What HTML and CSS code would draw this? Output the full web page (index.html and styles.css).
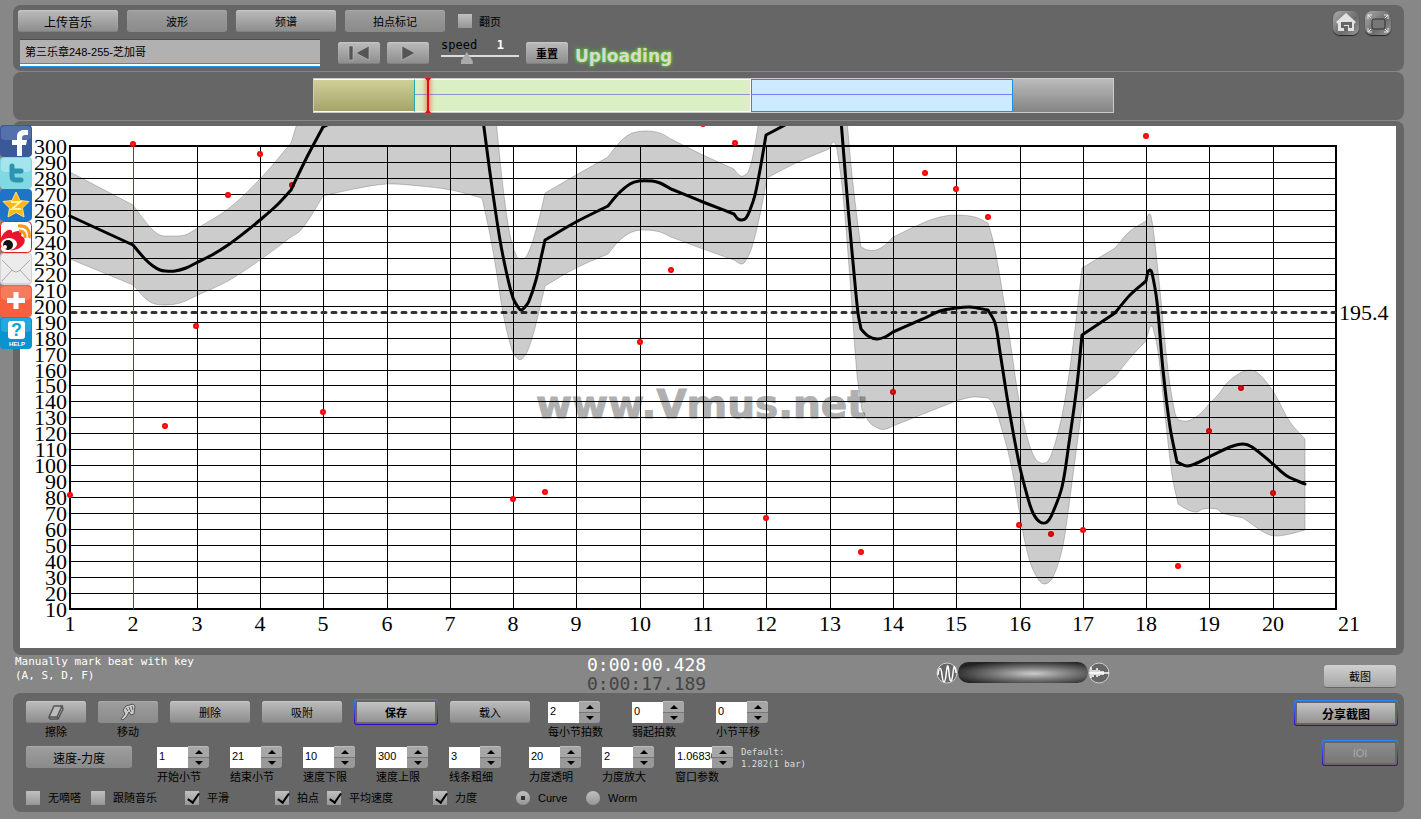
FILE: index.html
```html
<!DOCTYPE html>
<html lang="zh-CN">
<head>
    <meta charset="UTF-8">
    <meta name="viewport" content="width=device-width, initial-scale=1.0">
    <title>Vmus.net</title>
    <link rel="stylesheet" href="styles.css">
</head>
<body>
    <nav class="share">
        <a href="#" aria-label="Facebook">
            <svg viewBox="0 0 32 32"><rect width="32" height="32" rx="4" fill="#3b5998"/><rect x="1" y="1" width="30" height="14" rx="4" fill="#5471ac"/><path d="M17 31V20h-5v-5h5v-3c0-5 3-7 7-7h4v5h-3c-2 0-3 1-3 3v2h5l-1 5h-4v11z" fill="#fff"/></svg>
        </a>
        <a href="#" aria-label="Twitter">
            <svg viewBox="0 0 32 32"><rect width="32" height="32" rx="4" fill="#7fd8e2"/><rect x="1" y="1" width="30" height="14" rx="4" fill="#a2e5ec"/><path d="M12 9v10q0 4 4 4h5M12 14h9" fill="none" stroke="#2c93b0" stroke-width="5" stroke-linecap="round"/></svg>
        </a>
        <a href="#" aria-label="Qzone">
            <svg viewBox="0 0 32 32"><rect width="32" height="32" rx="4" fill="#1f74c8"/><path d="M16 3l4 8.500 9 1-6.500 6.500 1.500 9-8-4.500L8 28l1.500-9L3 12.500l9-1z" fill="#fdb913" stroke="#ffe08a"/><path d="M11 13h9l-8 7h9" fill="none" stroke="#fff2b0" stroke-width="2"/></svg>
        </a>
        <a href="#" aria-label="Weibo">
            <svg viewBox="0 0 32 32"><rect x=".5" y=".5" width="31" height="31" rx="4" fill="#fff" stroke="#d22"/><path d="M1 17c3-7 9-10 11-7 0 2 0 2 2 1 5-2 9-1 7 4 7 2 4 12-7 14-7 1-11-2-13-4z" fill="#e6162d"/><ellipse cx="9" cy="23" rx="8" ry="6" fill="#fff"/><circle cx="8" cy="24" r="5" fill="#111"/><circle cx="5" cy="26" r="2" fill="#fff"/><path d="M18 5q9-1 11 6 1 4 0 6M19 10q5 0 6 4v3" fill="none" stroke="#f8981d" stroke-width="3"/></svg>
        </a>
        <a href="#" aria-label="Email">
            <svg viewBox="0 0 32 32"><rect width="32" height="32" rx="4" fill="#d4d4d4"/><rect x="1" y="1" width="30" height="29" rx="4" fill="#ececec"/><path d="M2 7l11 11q3 2 6 0L30 7M2 28l10-11M30 28L20 17" fill="none" stroke="#aaa"/></svg>
        </a>
        <a href="#" aria-label="More">
            <svg viewBox="0 0 32 32"><rect width="32" height="32" rx="4" fill="#f5603f"/><rect x="1" y="1" width="30" height="14" rx="4" fill="#f87a5c"/><path d="M16 7v17M7 15.500h18" stroke="#fff" stroke-width="5"/></svg>
        </a>
        <a href="#" aria-label="Help">
            <svg viewBox="0 0 32 32"><rect width="32" height="32" rx="4" fill="#0a94cf"/><rect x="1" y="1" width="30" height="14" rx="4" fill="#25a8dc"/><rect x="8" y="4" width="17" height="18" rx="3" fill="#fff"/><text x="16.500" y="19" class="help-mark">?</text><text x="17" y="29" class="help-text">HELP</text></svg>
        </a>
    </nav>

    <header class="panel toolbar">
        <div>
            <div class="tabs">
                <button class="btn big">上传音乐</button>
                <button class="btn dim">波形</button>
                <button class="btn">频谱</button>
                <button class="btn dim">拍点标记</button>
                <label class="tick"><input type="checkbox">翻页</label>
            </div>
            <div class="player">
                <input class="track-name" type="text" value="第三乐章248-255-芝加哥" aria-label="Track">
                <button class="btn" aria-label="Back to start">
                    <svg width="22" height="16" viewBox="0 0 22 16"><path d="M1 1h4v14H1zM21 1v14L8 8z" fill="#555" stroke="#ccc" stroke-width=".5"/></svg>
                </button>
                <button class="btn" aria-label="Play">
                    <svg width="16" height="16" viewBox="0 0 16 16"><path d="M2 1v14l13-7z" fill="#555" stroke="#ccc" stroke-width=".5"/></svg>
                </button>
                <div class="speed">
                    <label for="speed">speed</label><output for="speed">1</output>
                    <input id="speed" type="range" min="0" max="3" step="0.1" value="0.9">
                </div>
                <button class="btn strong">重置</button>
                <span class="uploading">Uploading</span>
            </div>
        </div>
        <div class="window-buttons">
            <button aria-label="Home">
                <svg viewBox="0 0 26 25"><path d="M13 2L3 11l2 2v7h16v-7l2-2z" fill="#e2e2e2"/><path d="M8 17v-6h11v6h-3v-3h-5v3z" fill="#666"/><path d="M11 20v-5h4v5z" fill="#666"/></svg>
            </button>
            <button aria-label="Fullscreen">
                <svg viewBox="0 0 26 25"><rect x="7" y="8" width="13" height="10" rx="2" fill="#777" stroke="#333"/><path d="M3 8V4h4M3 4l3 3M19 4h4v4M23 4l-3 3M3 17v4h4M3 21l3-3M23 17v4h-4M23 21l-3-3" fill="none" stroke="#e8e8e8"/></svg>
            </button>
        </div>
    </header>

    <section class="panel overview">
        <div class="wave">
            <div class="part before"></div>
            <div class="part selected"></div>
            <div class="part loaded"></div>
            <div class="part empty"></div>
            <div class="playhead"></div>
        </div>
    </section>

    <main class="panel chart">
        <svg id="chart" viewBox="20 126 1376 522">
            <text x="536" y="418" class="watermark">www.Vmus.net</text>
            <g id="grid"></g>
            <g id="labels"></g>
            <path class="average" d="M72 312.500H1335"/>
            <text class="axis" x="1339" y="320">195.4</text>
            <path class="cursor" d="M133 144V609"/>
            <g id="beats"></g>
            <g id="curves"></g>
        </svg>
    </main>

    <section class="status">
        <p class="hint">Manually mark beat with key<br>(A, S, D, F)</p>
        <p class="time">0:00:00.428<br><span>0:00:17.189</span></p>
        <div class="zoom">
            <svg viewBox="0 0 22 22"><circle cx="11" cy="11" r="10"/><path d="M2 13c1-9 3-9 4 0s3 9 4 0 2-14 3-2 3 9 4 0 2-8 3 0" stroke-width="1.500"/></svg>
            <input type="range" aria-label="Zoom">
            <svg viewBox="0 0 22 22"><circle cx="11" cy="11" r="10"/><path d="M1 11h20M3 5v11M5 8v7M7 8v5M9 6v9M11 8v6M13 9v4M15 9v4" stroke-width="1.500"/></svg>
        </div>
        <button class="btn light">截图</button>
    </section>

    <footer class="panel settings">
        <div>
            <div class="row">
                <div class="tool">
                    <button class="btn" id="erase" aria-labelledby="erase-label"><svg width="20" height="16" viewBox="0 0 20 16"><path d="M8 2h8l-5 11H3zM16 2l1 3-5 10-1-2M12 15H4l-1-2" fill="#bbb" stroke="#555" stroke-width="1.500"/></svg></button>
                    <span id="erase-label">擦除</span>
                </div>
                <div class="tool">
                    <button class="btn dim" id="move" aria-labelledby="move-label"><svg width="20" height="18" viewBox="0 0 20 18"><path d="M3 16l4-5-2-4 3-4 7-2 2 2-1 8-3 1-2-3-2 4-4 4zM8 5l2 3M11 4l2 5M14 3l1 4" fill="#ccc" stroke="#555"/></svg></button>
                    <span id="move-label">移动</span>
                </div>
                <button class="btn wide">删除</button>
                <button class="btn wide">吸附</button>
                <button class="btn wide ringed">保存</button>
                <button class="btn wide">载入</button>
                <div class="steppers roomy">
                    <div class="stepper"><input id="beats-per-bar" type="text" value="2"><button aria-label="+"></button><button aria-label="-"></button><label for="beats-per-bar">每小节拍数</label></div>
                    <div class="stepper"><input id="upbeat" type="text" value="0"><button aria-label="+"></button><button aria-label="-"></button><label for="upbeat">弱起拍数</label></div>
                    <div class="stepper"><input id="shift" type="text" value="0"><button aria-label="+"></button><button aria-label="-"></button><label for="shift">小节平移</label></div>
                </div>
            </div>
            <div class="row">
                <button class="btn dim mode">速度-力度</button>
                <div class="steppers">
                    <div class="stepper"><input id="from" type="text" value="1"><button aria-label="+"></button><button aria-label="-"></button><label for="from">开始小节</label></div>
                    <div class="stepper"><input id="to" type="text" value="21"><button aria-label="+"></button><button aria-label="-"></button><label for="to">结束小节</label></div>
                    <div class="stepper"><input id="min" type="text" value="10"><button aria-label="+"></button><button aria-label="-"></button><label for="min">速度下限</label></div>
                    <div class="stepper"><input id="max" type="text" value="300"><button aria-label="+"></button><button aria-label="-"></button><label for="max">速度上限</label></div>
                    <div class="stepper"><input id="line" type="text" value="3"><button aria-label="+"></button><button aria-label="-"></button><label for="line">线条粗细</label></div>
                </div>
                <div class="steppers">
                    <div class="stepper"><input id="alpha" type="text" value="20"><button aria-label="+"></button><button aria-label="-"></button><label for="alpha">力度透明</label></div>
                    <div class="stepper"><input id="scale" type="text" value="2"><button aria-label="+"></button><button aria-label="-"></button><label for="scale">力度放大</label></div>
                    <div class="stepper long"><input id="window" type="text" value="1.06830"><button aria-label="+"></button><button aria-label="-"></button><label for="window">窗口参数</label></div>
                </div>
                <p class="default">Default:<br>1.282(1 bar)</p>
            </div>
            <div class="options">
                <label class="tick"><input type="checkbox">无嘀嗒</label>
                <label class="tick"><input type="checkbox">跟随音乐</label>
                <label class="tick"><input type="checkbox" checked>平滑</label>
                <label class="tick"><input type="checkbox" checked>拍点</label>
                <label class="tick"><input type="checkbox" checked>平均速度</label>
                <label class="tick"><input type="checkbox" checked>力度</label>
                <label class="tick"><input type="radio" name="view" checked>Curve</label>
                <label class="tick"><input type="radio" name="view">Worm</label>
            </div>
        </div>
        <div class="side">
            <button class="btn ringed share-shot">分享截图</button>
            <button class="btn ringed" disabled>IOI</button>
        </div>
    </footer>

    <script>
        const NS = 'http://www.w3.org/2000/svg';
        const left = 70, right = 1336, upper = 146, lower = 609;

        function add(parent, tag, attrs, text) {
            const el = document.createElementNS(NS, tag);
            for (const key in attrs) el.setAttribute(key, attrs[key]);
            if (text !== undefined) el.textContent = text;
            document.getElementById(parent).appendChild(el);
        }

        // tempo lines
        for (let v = 10; v <= 300; v += 10) {
            const y = Math.round(lower - (v - 10) * (lower - upper) / 290);
            add('grid', 'path', { d: `M${left} ${y}H${right}` });
            add('labels', 'text', { class: 'axis', x: 67, y: y + 8, 'text-anchor': 'end' }, v);
        }

        // bar lines
        for (let bar = 1; bar <= 21; bar++) {
            const x = Math.round(left + (bar - 1) * (right - left) / 20);
            add('grid', 'path', { d: `M${x} ${upper}V${lower}` });
            add('labels', 'text', {
                class: 'axis',
                x: bar === 21 ? x + 2 : x,
                y: 631,
                'text-anchor': bar === 21 ? 'start' : 'middle'
            }, bar);
        }
        add('grid', 'rect', { class: 'frame', x: left, y: upper, width: right - left, height: lower - upper });

        const beats = [
            [70, 495], [133, 144], [165, 426], [196, 326], [228, 195], [260, 154], [292, 185],
            [323, 412], [513, 499], [545, 492], [640, 342], [671, 270], [703, 124], [735, 143],
            [766, 518], [861, 552], [893, 392], [925, 173], [956, 189], [988, 217], [1019, 525],
            [1051, 534], [1083, 530], [1146, 136], [1178, 566], [1209, 431], [1241, 388], [1273, 493]
        ];
        beats.forEach(([x, y]) => add('beats', 'circle', { cx: x, cy: y, r: 2 }));

        // Smooth line through the points; "|" marks a corner between two runs
        function smooth(data) {
            let d = '';
            data.split('|').forEach(run => {
                const p = run.trim().split(/\s+/).map(s => s.split(',').map(Number));
                d += (d ? 'L' : 'M') + p[0];
                for (let i = 0; i < p.length - 1; i++) {
                    const a = p[i], b = p[i + 1];
                    const third = Math.hypot(b[0] - a[0], b[1] - a[1]) / 3;
                    const s = tangent(p[i - 1] || a, b), e = tangent(a, p[i + 2] || b);
                    d += `C${a[0] + s[0] * third} ${a[1] + s[1] * third} ${b[0] - e[0] * third} ${b[1] - e[1] * third} ${b}`;
                }
            });
            return d;
        }

        function tangent(a, b) {
            const len = Math.hypot(b[0] - a[0], b[1] - a[1]);
            return [(b[0] - a[0]) / len, (b[1] - a[1]) / len];
        }

        const band = smooth(`
            70,172 133,205 | 133,205 150,227 160,235 172,236 185,235 196,229 | 196,229 228,209 260,179 291,143 | 291,143 298,120 |
            496,120 503,187 510,235 517,257 521,259 526,257 533,240 540,215 545,193 | 545,193 576,175 608,157 |
            608,157 618,144 630,134 645,131 660,133 671,139 | 671,139 703,155 734,169 | 734,169 739,175 743,176 748,172 753,155 759,120 |
            847,120 852,175 858,225 861,247 | 861,247 868,250 876,250 885,245 893,237 | 893,237 925,222 940,217 956,215 975,217 988,223 |
            988,223 993,240 1000,277 1010,340 1019,400 1028,440 1035,458 1041,463 1048,461 1056,440 1064,405 1073,345 1082,268 |
            1082,268 1115,248 | 1115,248 1130,231 1146,221 | 1146,221 1149,214 1151,216 1154,235 1160,290 1168,370 1175,413 1178,420 |
            1178,420 1187,421 1196,417 1204,410 1209,404 1218,395 1227,383 1240,373 1250,370 1258,373 1273,391 1290,422 1305,439 |
            1305,530 1290,534 1275,536 1265,533 1243,518 | 1243,518 1222,513 1217,509 1203,509 1197,512 1188,510 1178,504 |
            1178,504 1172,475 1165,415 1158,352 1153,328 1151,326 1149,330 1146,341 | 1146,341 1130,358 1115,377 | 1115,377 1083,401 |
            1083,401 1077,445 1067,520 1062,550 1053,577 1045,584 1038,579 1030,562 1023,533 1019,510 1010,460 1000,423 993,403 988,398 |
            988,398 973,397 956,401 | 956,401 893,426 | 893,426 886,429 880,429 870,423 862,410 | 862,410 857,375 850,280 843,195 837,150 834,142 831,145 829,149 |
            829,149 798,162 767,178 | 767,178 760,215 752,247 745,262 741,264 734,260 | 734,260 703,249 671,237 | 671,237 660,232 645,230 632,232 620,240 608,254 |
            608,254 576,268 545,286 | 545,286 535,328 528,350 522,359 518,359 512,350 503,313 497,275 490,235 482,198 |
            482,198 451,190 420,186 387,184 354,189 323,196 | 323,196 311,216 300,231 291,237 | 291,237 260,260 228,281 196,296 |
            196,296 180,303 165,305 150,302 133,285 | 133,285 70,259`) + 'Z';

        const tempo = [
            `70,216 133,245 | 133,245 145,259 153,266 160,270 165,271 175,271 186,268 196,263 | 196,263 212,255 228,245 244,233 260,220 276,206 291,190 |
            291,190 307,157 323,127 | 323,127 340,119`,
            `483,120 491,180 500,240 507,275 513,298 518,307 521,310 525,307 529,301 536,280 541,258 545,240 | 545,240 576,222 608,206 |
            608,206 618,194 630,184 639,181 652,181 660,183 671,189 | 671,189 703,202 734,214 | 734,214 738,219 742,220 746,218 750,210 755,195 760,170 766,135 |
            766,135 785,125 795,120`,
            `841,120 848,207 854,273 858,313 861,329 | 861,329 868,336 877,339 885,337 893,332 | 893,332 925,318 940,311 956,308 970,307 988,310 |
            988,310 995,323 1000,352 1008,403 1019,463 1027,495 1033,513 1040,522 1047,522 1053,512 1062,487 1069,443 1077,385 1082,335 |
            1082,335 1115,313 | 1115,313 1130,295 1146,281 | 1146,281 1148,272 1150,270 1152,273 1157,302 1163,370 1170,427 1177,462 |
            1177,462 1187,466 1197,463 1209,457 1230,447 1243,444 1252,447 1273,464 1287,476 1305,484`
        ];

        add('curves', 'path', { class: 'band', d: band });
        tempo.forEach(points => add('curves', 'path', { class: 'tempo', d: smooth(points) }));
    </script>
</body>
</html>
```
FILE: styles.css
```css
* {
    box-sizing: border-box;
}

body {
    margin: 0;
    padding: 5px 17px 7px 13px;
    background: #878787;
    color: #000;
    font-family: "Liberation Sans", "Noto Sans CJK SC", sans-serif;
    font-size: 11px;
}

p {
    margin: 0;
}

button,
input {
    font: inherit;
    color: inherit;
    margin: 0;
}

.panel {
    background: #666;
    border-radius: 8px;
    margin-bottom: 1px;
}

/* Buttons */
.btn {
    display: flex;
    align-items: center;
    justify-content: center;
    height: 22px;
    padding: 0;
    border: 0;
    border-radius: 3px;
    background: linear-gradient(#bcbcbc, #8c8c8c);
    box-shadow: inset 0 1px 1px #c8c8c8, inset 0 -1px 0 #808080;
}

.btn.dim {
    background: linear-gradient(#9e9e9e, #8a8a8a);
    box-shadow: inset 0 1px 1px #aaa;
}

.btn.light {
    background: linear-gradient(#d0d0d0, #a6a6a6);
    box-shadow: 0 1px 0 #666;
}

.btn.big {
    font-size: 12px;
}

.btn.strong {
    font-weight: bold;
}

.btn.ringed {
    height: 26px;
    padding: 2px;
    border: 1px solid transparent;
    font-weight: bold;
    background: linear-gradient(#c4c4c4, #929292) content-box, linear-gradient(#666, #666) padding-box, linear-gradient(#2a8cff, #3a00c8) border-box;
    box-shadow: none;
}

.btn.ringed:disabled {
    font-weight: normal;
    color: #aaa;
    background: linear-gradient(#8c8c8c, #777) content-box, linear-gradient(#666, #666) padding-box, linear-gradient(#2a8cff, #3a00c8) border-box;
}

/* Tick boxes and radios */
.tick {
    display: flex;
    align-items: center;
    gap: 8px;
    white-space: nowrap;
}

.tick input {
    appearance: none;
    position: relative;
    width: 14px;
    height: 14px;
    background: linear-gradient(#c0c0c0, #969696);
}

.tick input[type="radio"] {
    border-radius: 50%;
}

.tick input[type="checkbox"]:checked::after {
    content: "";
    position: absolute;
    left: 5px;
    top: 0;
    width: 5px;
    height: 10px;
    border: solid #000;
    border-width: 0 2px 2px 0;
    transform: rotate(35deg);
}

.tick input[type="radio"]:checked::after {
    content: "";
    position: absolute;
    left: 5px;
    top: 5px;
    width: 4px;
    height: 4px;
    background: #333;
}

/* Share links over the left edge */
.share {
    position: absolute;
    left: 0;
    top: 125px;
    z-index: 2;
}

.share a,
.share svg {
    display: block;
    width: 32px;
    height: 32px;
}

.help-mark {
    font: bold 18px "Liberation Sans", sans-serif;
    text-anchor: middle;
    fill: #0aa5d8;
}

.help-text {
    font: bold 6px "Liberation Sans", sans-serif;
    text-anchor: middle;
    fill: #fff;
}

/* Toolbar */
.toolbar {
    display: flex;
    justify-content: space-between;
    height: 66px;
    padding: 5px 13px 0 5px;
}

.tabs {
    display: flex;
    gap: 9px;
}

.tabs .btn {
    width: 100px;
}

.tabs .tick {
    height: 22px;
    margin-left: 4px;
    gap: 7px;
}

.player {
    display: flex;
    gap: 7px;
    margin: 7px 0 0 2px;
}

.player .btn {
    width: 42px;
    margin-top: 3px;
}

.track-name {
    width: 300px;
    height: 28px;
    margin-right: 11px;
    padding: 0 5px 4px;
    border: 0;
    border-top: 1px solid #4c4c4c;
    border-bottom: 1px solid #1a96f0;
    background: #b1b1b1;
    box-shadow: inset 0 -2px 0 #fff, inset 0 -3px 0 #1a96f0;
}

.speed {
    display: grid;
    grid-template-columns: 1fr auto;
    grid-template-rows: 12px 14px;
    align-content: start;
    width: 78px;
    margin-left: 5px;
    font: 12px/12px "DejaVu Sans Mono", monospace;
}

.speed output {
    padding-right: 15px;
    color: #fff;
    font-weight: bold;
}

.speed input {
    appearance: none;
    grid-column: 1 / 3;
    width: 100%;
    height: 14px;
    background: linear-gradient(#ddd, #ddd) 0 4px / 100% 2px no-repeat;
}

.speed input::-webkit-slider-thumb {
    appearance: none;
    width: 12px;
    height: 12px;
    background: #aaa;
    clip-path: polygon(50% 0, 100% 75%, 100% 100%, 0 100%, 0 75%);
}

.uploading {
    font: bold 17px/34px "DejaVu Sans", sans-serif;
    color: #d8d8d8;
    text-shadow: 0 0 2px #5be01c, 0 0 4px #5be01c;
}

.window-buttons {
    display: flex;
    gap: 6px;
    margin-top: 1px;
}

.window-buttons button {
    width: 26px;
    height: 24px;
    padding: 0;
    border: 0;
    border-radius: 7px;
    background: linear-gradient(135deg, #aaa, #6c6c6c 60%, #999);
    box-shadow: 0 1px 1px #222;
}

.window-buttons svg {
    display: block;
}

/* Overview */
.overview {
    height: 48px;
    padding: 6px 290px 0 300px;
}

.wave {
    position: relative;
    display: flex;
    height: 35px;
    border: 1px solid #ccc;
    background: linear-gradient(#bbb, #848484);
}

.part.before {
    flex: 101;
    border-top: 1px solid #fff;
    border-bottom: 1px solid #fff;
    background: linear-gradient(#d0cf98, #a5a468);
}

.part.selected {
    flex: 337;
    border: 1px solid #fff;
    border-left-color: #2aa;
    background: linear-gradient(#8f95c8, #8f95c8) 0 47% / 100% 1px no-repeat, #daefc2;
}

.part.loaded {
    flex: 262;
    border: 1px solid #1a90e8;
    background: linear-gradient(#7880f0, #7880f0) 0 47% / 100% 1px no-repeat, #cdeaff;
}

.part.empty {
    flex: 101;
}

.playhead {
    position: absolute;
    left: 14%;
    top: 0;
    width: 2px;
    height: 33px;
    margin-left: 1px;
    background: #e01010;
    box-shadow: 0 0 4px 2px rgba(255, 60, 40, 0.5);
}

.playhead::before,
.playhead::after {
    content: "";
    position: absolute;
    left: -2px;
    top: -1px;
    border: solid transparent;
    border-width: 4px 3px 0;
    border-top-color: #e01010;
}

.playhead::after {
    top: auto;
    bottom: -1px;
    border-width: 0 3px 4px;
    border-bottom-color: #e01010;
}

/* Chart */
.chart {
    margin-bottom: 0;
    padding: 5px 8px 7px 7px;
}

#chart {
    display: block;
    width: 100%;
    background: #fff;
}

#grid path,
#grid rect {
    fill: none;
    stroke: #000;
    shape-rendering: crispEdges;
}

#grid .frame {
    stroke-width: 2;
}

.axis {
    font: 22px "Liberation Serif", serif;
}

.watermark {
    font: bold 39px "DejaVu Sans", sans-serif;
    fill: #b0b0b0;
    stroke: #b0b0b0;
}

.average {
    stroke: #333;
    stroke-width: 3;
    stroke-linecap: round;
    stroke-dasharray: 4 6;
}

.cursor {
    stroke: #f00;
    shape-rendering: crispEdges;
}

#beats circle {
    fill: #f33;
    stroke: #f00;
    stroke-width: 2;
}

.band {
    fill: rgba(0, 0, 0, 0.2);
    stroke: rgba(0, 0, 0, 0.2);
}

.tempo {
    fill: none;
    stroke: #000;
    stroke-width: 3;
    stroke-linejoin: round;
    stroke-linecap: round;
}

/* Status line */
.status {
    display: grid;
    grid-template-columns: 572fr 349fr 388fr 72px;
    height: 38px;
    padding: 0 8px 0 2px;
}

.hint {
    font: 11px/14px "DejaVu Sans Mono", monospace;
    color: #fff;
}

.time {
    font: 18px/19px "DejaVu Sans Mono", monospace;
    color: #fff;
}

.time span {
    color: #444;
}

.zoom {
    display: flex;
    margin-top: 7px;
}

.zoom svg {
    width: 22px;
    height: 22px;
    fill: none;
    stroke: #fff;
}

.zoom circle {
    fill: #666;
    stroke: #ccc;
}

.zoom input {
    appearance: none;
    width: 130px;
    height: 21px;
    border-radius: 11px;
    background: radial-gradient(ellipse at 58% 55%, #ccc, #888 30%, #222 80%);
}

.zoom input::-webkit-slider-thumb {
    appearance: none;
    width: 1px;
}

.status .btn {
    margin-top: 10px;
}

/* Settings */
.settings {
    display: flex;
    justify-content: space-between;
    height: 119px;
    margin-bottom: 0;
    padding: 8px 6px 0 13px;
}

.row {
    display: flex;
    align-items: flex-start;
    height: 45px;
    gap: 12px;
}

.row .btn {
    width: 60px;
}

.row .wide {
    width: 80px;
}

.row .ringed {
    width: 84px;
    margin-top: -2px;
}

.row .mode {
    width: 106px;
    margin-right: 13px;
    font-size: 12px;
}

.tool {
    line-height: 18px;
    text-align: center;
}

.steppers {
    display: flex;
    gap: 21px;
    margin-right: 16px;
}

.steppers:nth-child(3) {
    margin-right: -4px;
}

.steppers.roomy {
    gap: 32px;
    margin-left: 6px;
}

.stepper {
    display: grid;
    grid-template-columns: 31px 21px;
    grid-template-rows: 11px 11px 18px;
    width: 52px;
}

.stepper.long {
    grid-template-columns: 37px 21px;
    width: 58px;
}

.stepper input {
    grid-row: 1 / 3;
    width: 100%;
    height: 21px;
    margin-top: 1px;
    padding: 0 0 4px 2px;
    border: 0;
    background: #fff;
}

.stepper button {
    grid-column: 2;
    position: relative;
    padding: 0;
    border: 0;
    border-radius: 0 3px 0 0;
    background: #a6a6a6;
    box-shadow: inset 0 1px 0 #bbb;
}

.stepper button + button {
    border-radius: 0 0 3px 0;
    background: #999;
    box-shadow: inset 0 1px 0 #777;
}

.stepper button::after {
    content: "";
    position: absolute;
    left: 7px;
    top: 4px;
    border: solid transparent;
    border-width: 0 4px 4px;
    border-bottom-color: #000;
}

.stepper button + button::after {
    border-width: 4px 4px 0;
    border-top-color: #000;
}

.stepper label {
    grid-column: 1 / 3;
    line-height: 18px;
    white-space: nowrap;
}

.default {
    font: 9px/12px "DejaVu Sans Mono", monospace;
    color: #ddd;
}

.options {
    display: grid;
    grid-template-columns: 65px 94px 90px 52px 106px 83px 70px auto;
    line-height: 14px;
}

.side {
    display: flex;
    flex-direction: column;
    align-items: flex-end;
    gap: 14px;
    margin-top: -1px;
}

.side .btn {
    width: 76px;
}

.side .share-shot {
    width: 104px;
    font-size: 12px;
}
```
